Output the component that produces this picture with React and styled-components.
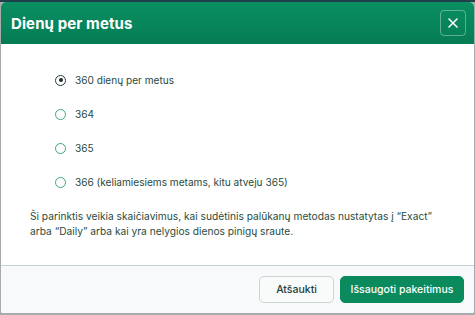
import React, { useState } from "react";
import styled, { createGlobalStyle } from "styled-components";

const Global = createGlobalStyle`
  html, body { margin: 0; padding: 0; }
  body {
    background: #9ea3a5;
    font-family: Inter, "Noto Sans", sans-serif;
    width: 475px;
    height: 315px;
    overflow: hidden;
  }
  * { box-sizing: border-box; }
`;

const Backdrop = styled.div`
  width: 475px;
  height: 315px;
  padding: 2px 1px 2px 1px;
  background: linear-gradient(#20404a 0, #20404a 2px, #a7abad 2px);
`;

const Dialog = styled.div`
  width: 100%;
  height: 100%;
  background: #fff;
  border-radius: 5px 5px 2px 2px;
  overflow: hidden;
  display: flex;
  flex-direction: column;
`;

const Header = styled.div`
  height: 42px;
  flex: none;
  display: flex;
  align-items: center;
  justify-content: space-between;
  padding: 0 8px 0 10px;
  background: linear-gradient(180deg, #0a8e60 0%, #07845a 60%, #077b53 100%);
`;

const Title = styled.h1`
  margin: 0;
  color: #fff;
  font-size: 15px;
  font-weight: 700;
  letter-spacing: 0.1px;
`;

const CloseButton = styled.button`
  width: 26px;
  height: 26px;
  border: 1px solid rgba(255, 255, 255, 0.35);
  border-radius: 4px;
  background: transparent;
  display: flex;
  align-items: center;
  justify-content: center;
  padding: 0;
  cursor: pointer;
`;

const Body = styled.div`
  flex: 1;
  padding: 29px 29px 0 29px;
  display: flex;
  flex-direction: column;
`;

const Options = styled.div`
  display: flex;
  flex-direction: column;
  gap: 20px;
  padding-left: 25px;
`;

const Option = styled.label`
  display: flex;
  align-items: center;
  gap: 9px;
  height: 14px;
  font-size: 10.1px;
  color: #2a4a40;
  cursor: pointer;
`;

const Radio = styled.span`
  width: 11px;
  height: 11px;
  border-radius: 50%;
  border: 1px solid ${(p) => (p.$checked ? "#2c3a36" : "#3aa784")};
  display: flex;
  align-items: center;
  justify-content: center;
  flex: none;
  &::after {
    content: "";
    width: 4px;
    height: 4px;
    border-radius: 50%;
    background: #1d2a26;
    display: ${(p) => (p.$checked ? "block" : "none")};
  }
`;

const Note = styled.p`
  margin: 20px 0 0 0;
  font-size: 10.2px;
  line-height: 14.5px;
  color: #2a4a40;
`;

const Footer = styled.div`
  flex: none;
  height: 48px;
  border-top: 1px solid #c5d3ce;
  background: #f8f9fa;
  display: flex;
  align-items: center;
  justify-content: flex-end;
  gap: 6px;
  padding: 0 10px 1px 0;
`;

const Button = styled.button`
  height: 27px;
  border-radius: 5px;
  font-family: Inter, "Noto Sans", sans-serif;
  font-size: 10.5px;
  font-weight: 500;
  padding: 0;
  cursor: pointer;
  width: ${(p) => p.$w}px;
  border: 1px solid ${(p) => (p.$primary ? "#0a8a5d" : "#c9d6d2")};
  background: ${(p) => (p.$primary ? "#0a8a5d" : "#f9fbfb")};
  color: ${(p) => (p.$primary ? "#ffffff" : "#22403a")};
`;

const options = [
  "360 dienų per metus",
  "364",
  "365",
  "366 (keliamiesiems metams, kitu atveju 365)",
];

export default function App() {
  const [sel, setSel] = useState(0);
  return (
    <>
      <Global />
      <Backdrop>
        <Dialog>
          <Header>
            <Title>Dienų per metus</Title>
            <CloseButton aria-label="Uždaryti">
              <svg width="12" height="12" viewBox="0 0 12 12">
                <path d="M2 2L10 10M10 2L2 10" stroke="#fff" strokeWidth="1.6" strokeLinecap="round" />
              </svg>
            </CloseButton>
          </Header>
          <Body>
            <Options>
              {options.map((o, i) => (
                <Option key={o} onClick={() => setSel(i)}>
                  <Radio $checked={sel === i} />
                  {o}
                </Option>
              ))}
            </Options>
            <Note>
              Ši parinktis veikia skaičiavimus, kai sudėtinis palūkanų metodas nustatytas į “Exact”
              <br />
              arba “Daily” arba kai yra nelygios dienos pinigų sraute.
            </Note>
          </Body>
          <Footer>
            <Button $w={75}>Atšaukti</Button>
            <Button $primary $w={124}>Išsaugoti pakeitimus</Button>
          </Footer>
        </Dialog>
      </Backdrop>
    </>
  );
}
